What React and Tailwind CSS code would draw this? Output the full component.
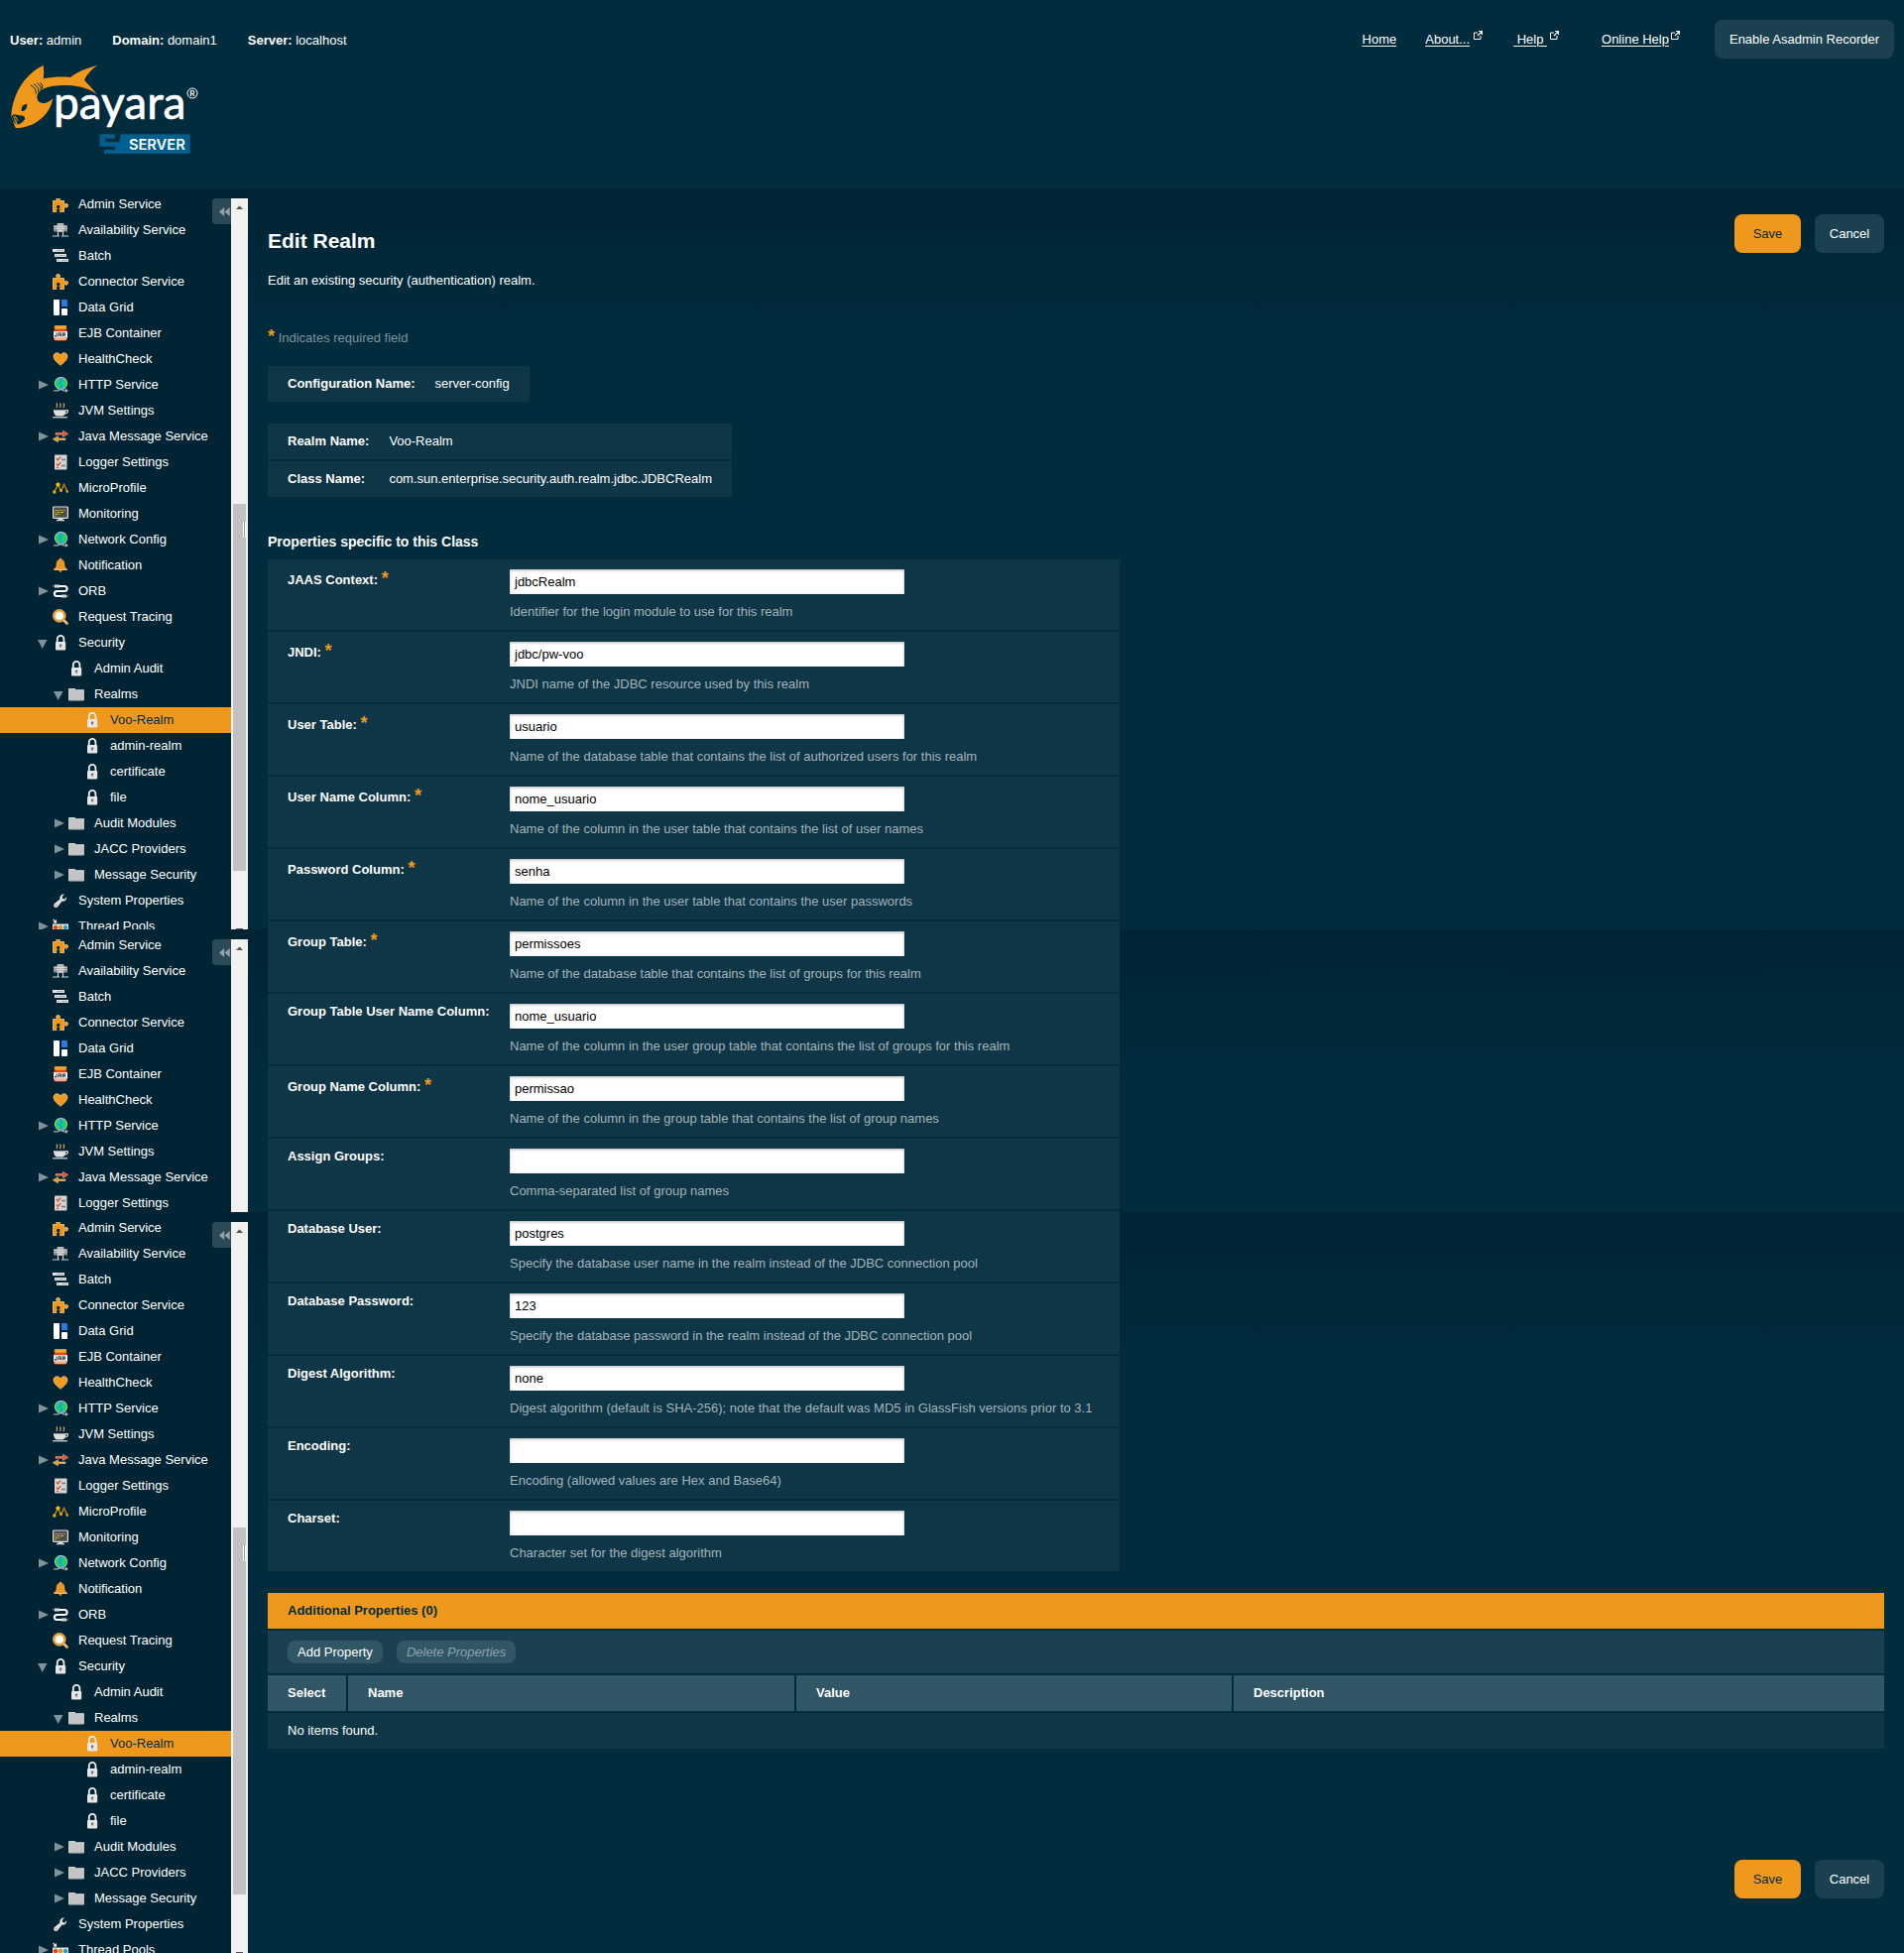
import React from "react";

const svg = { width: 16, height: 16, viewBox: "0 0 16 16", "aria-hidden": true, className: "block shrink-0" };

const icons = {
  puzzle: (
    <svg {...svg}>
      <path d="M.5 4.500h3.600V3.400a1.900 1.900 0 1 1 3 0v1.100h4.400v3.300h1a1.900 1.900 0 1 1 0 2.900h-1v4.800H.5z" fill="#f0981b" stroke="#f8cf94" strokeWidth="0.800" />
      <circle cx="5.700" cy="10.500" r="1.700" fill="#002433" />
      <path d="M5 11h1.400v2h.8v3H4.200v-3H5z" fill="#002433" />
    </svg>
  ),
  cluster: (
    <svg {...svg}>
      <rect x="1" y="3" width="4.5" height="6.5" fill="#8b8b8b" />
      <rect x="10.5" y="3" width="4.5" height="6.5" fill="#8b8b8b" />
      <rect x="4.5" y="1" width="7" height="9" rx="1" fill="#b9b9b9" />
      <path d="M1.5 4.5h13M1.5 6.5h13M5 8.5h6" stroke="#dcdcdc" strokeWidth="0.8" />
      <path d="M5.500 10v3.500M10.500 10v3.500M0 14h7M9 14h7" stroke="#cfcfcf" strokeWidth="1.2" fill="none" />
    </svg>
  ),
  batch: (
    <svg {...svg}>
      <path d="M0 2.500h12M2 7.500h12M4 12.500h12" stroke="#e3e3e3" strokeWidth="3" />
      <path d="M4 2.500h7M3 7.500h2M6 7.500h7M5 12.500h2M9 12.500h6" stroke="#aaa" strokeWidth="1" />
    </svg>
  ),
  grid: (
    <svg {...svg}>
      <rect x="1" y="0" width="6" height="16" rx="1" fill="#fff" />
      <path d="M9 0h5l1 1v6H9z" fill="#2f78dc" />
      <rect x="9" y="9" width="6" height="7" rx="1" fill="#fff" />
    </svg>
  ),
  jar: (
    <svg {...svg}>
      <rect x="2" y="0" width="12" height="4" rx="1" fill="#f5a830" stroke="#c86a10" strokeWidth="0.7" />
      <rect x="1.2" y="4" width="13.6" height="11.6" rx="2" fill="#e8431c" />
      <rect x="2" y="12.6" width="12" height="2.4" rx="1" fill="#f0b090" />
      <rect x="1" y="6.2" width="14" height="6.4" fill="#f4f4f4" />
      <path d="M4 7.5v3.6H2.4V10M6 11.4V7.8h2.6v3.6M6 9.8h2.6M10.4 11.4V7.8h2.2v1.7h-2M11.4 9.6l1.6 1.8" stroke="#222" strokeWidth="0.9" fill="none" />
    </svg>
  ),
  heart: (
    <svg {...svg}>
      <path d="M8 14.3C4 11 1 8.500 1 5.300 1 3 2.500 1.700 4.400 1.700c1.600 0 2.900.9 3.600 2.300.7-1.400 2-2.300 3.600-2.300C13.500 1.700 15 3 15 5.300 15 8.500 12 11 8 14.300z" fill="#f09a20" stroke="#f7cf98" strokeWidth="0.7" />
    </svg>
  ),
  globe: (
    <svg {...svg}>
      <circle cx="8.500" cy="6.500" r="6" fill="#1fa3df" stroke="#bdbdbd" strokeWidth="1.1" />
      <path d="M5 2.600c2-1.200 3 .4 2.200 1.700-.8 1-2.200 1-2 2.300.6 1.400 2.200 1 2.600 2.500.1 1-.8 2.400-1.600 2.400C4.500 10.500 3.400 8.500 3.400 6.500 3.400 5 4 3.500 5 2.600zM9.500 2c2.300.3 4 2 4.200 4.400 0 2.200-1.500 4.200-3 4.500-.9-.6 0-2-.8-2.900-.9-.8-1.300-1.700-.6-2.600.9-.9 1-1.400.2-3.400z" fill="#14e03c" />
      <path d="M1 13.800h4.500l1.500-1h2.500l1.500 1h3.500M13 12.200l2 1.600-2 1.600" stroke="#9fb3b0" strokeWidth="1.2" fill="none" />
    </svg>
  ),
  cup: (
    <svg {...svg}>
      <path d="M4.500 0.500c-1 1 .8 1.700 0 2.800-.6.7-.5 1.200 0 1.700M8 .5c-1 1 .8 1.700 0 2.800-.6.7-.5 1.200 0 1.700M11.500.5c-1 1 .8 1.700 0 2.800-.6.7-.5 1.200 0 1.700" stroke="#e0a860" strokeWidth="1.200" fill="none" />
      <path d="M1 7h12.500c0 4-1.500 6.500-4 6.500H5c-2.500 0-4-2.500-4-6.500z" fill="#dedede" />
      <path d="M13 7.800c2-.7 3 .3 2.400 1.500-.5 1.100-1.800 1.700-3 1.700" stroke="#dedede" strokeWidth="1.200" fill="none" />
      <path d="M2 7.500h11" stroke="#9a9a9a" strokeWidth="1" />
      <path d="M0 14.800h15" stroke="#cfcfcf" strokeWidth="1.300" />
    </svg>
  ),
  arrows: (
    <svg {...svg}>
      <path d="M3 4.600h7.500V2.400l5.200 3-5.200 3V6.200H3z" fill="#e84a1c" stroke="#fbd8cc" strokeWidth="0.500" />
      <path d="M13 9.900H5.500V7.700l-5.200 3 5.200 3v-2.200H13z" fill="#f09a20" stroke="#fbe0b8" strokeWidth="0.500" />
    </svg>
  ),
  logger: (
    <svg {...svg}>
      <rect x="2" y="0.500" width="12.500" height="15" rx="0.800" fill="#d4d4d4" />
      <path d="M4 4l1.300 2L8.300 2.600M4 9.500l1.300 2 3-3.400" stroke="#e8431c" strokeWidth="1.300" fill="none" />
      <path d="M9 5.500h4M9 11.500h4" stroke="#777" strokeWidth="1.300" />
      <path d="M4 13.500h2" stroke="#e8431c" strokeWidth="1" />
    </svg>
  ),
  micro: (
    <svg {...svg}>
      <path d="M1.800 12L5.500 4.500 8.500 11l3-6.500 3.200 6.500" stroke="#c98f10" strokeWidth="1.300" fill="none" />
      <circle cx="1.800" cy="12" r="1.700" fill="#f2aa12" />
      <circle cx="5.500" cy="4.500" r="2.100" fill="#f9b814" />
      <circle cx="8.500" cy="10.500" r="1.500" fill="#f2aa12" />
      <circle cx="11.500" cy="5" r="1.500" fill="#8a6a18" />
      <circle cx="14.700" cy="11.500" r="1.300" fill="#f2aa12" />
    </svg>
  ),
  monitor: (
    <svg {...svg}>
      <rect x="0.600" y="1" width="14.800" height="11.400" rx="0.800" fill="#4c4c4c" stroke="#e2e2e2" strokeWidth="1.200" />
      <path d="M2.500 4.500h2m1 0h2m1 0h1.500m1 0h1M2.500 6.500h1m1 0h2.500m1 0h3M2.500 8.500h3m1 0h1M2.500 10.300h1" stroke="#d9c235" strokeWidth="1" />
      <path d="M6 12.500h4l.5 1.500h1.500v1.200H4V14h1.500z" fill="#dcdcdc" />
    </svg>
  ),
  bell: (
    <svg {...svg}>
      <path d="M8 1c.8 0 1.200.5 1.200 1.300C11.500 3 12 5 12 7.500c0 2.200 1 3.400 2.700 4.500H1.300C3 10.900 4 9.700 4 7.500 4 5 4.500 3 6.800 2.300 6.800 1.500 7.200 1 8 1z" fill="#f0981b" stroke="#f6c078" strokeWidth="0.500" />
      <path d="M6.500 12.500h3c0 1.500-.5 2.500-1.500 2.500s-1.500-1-1.500-2.500z" fill="#d8841a" />
      <path d="M1.300 12.400h13.400" stroke="#f9c884" strokeWidth="1" />
    </svg>
  ),
  orb: (
    <svg {...svg}>
      <path d="M4 3h8c3.500 0 3.500 5 0 5H4.500C1 8 1 13 4.500 13H11" stroke="#fff" strokeWidth="2" fill="none" />
      <path d="M0 3h2" stroke="#9aa" strokeWidth="1" />
      <rect x="2" y="1.500" width="5" height="3" fill="#d8d8d8" />
      <rect x="9" y="11.500" width="5" height="3" fill="#d8d8d8" />
      <path d="M14 13h2" stroke="#9aa" strokeWidth="1" />
    </svg>
  ),
  magnifier: (
    <svg {...svg}>
      <path d="M10.500 10.500l4 4" stroke="#f3b877" strokeWidth="2.600" strokeLinecap="round" />
      <circle cx="6.800" cy="6.800" r="5.400" fill="#fdfdfd" stroke="#f0981b" strokeWidth="2" />
      <circle cx="6.800" cy="6.800" r="6.500" fill="none" stroke="#f8cf94" strokeWidth="0.600" />
      <path d="M4 8.500A3.300 3.300 0 0 1 8 3.700" stroke="#c9d8de" strokeWidth="0.800" fill="none" />
    </svg>
  ),
  lock: (
    <svg {...svg}>
      <path d="M4.800 8V4.200a3.300 3.300 0 0 1 6.600 0V8" stroke="#ededed" strokeWidth="1.800" fill="none" />
      <rect x="3" y="7" width="10.200" height="8.500" rx="1" fill="#e6e6e6" />
      <circle cx="8.100" cy="10.700" r="1.300" fill="#666" />
      <path d="M8.100 10.500v2.800" stroke="#888" strokeWidth="0.900" />
    </svg>
  ),
  folder: (
    <svg {...svg}>
      <path d="M0.500 2.500h6l1 1.200h8v10.300H.5z" fill="#c4c4c4" stroke="#dedede" strokeWidth="0.900" />
      <path d="M1 13.500h14.500V5" stroke="#a9a9a9" strokeWidth="0.600" fill="none" />
    </svg>
  ),
  wrench: (
    <svg {...svg}>
      <path d="M14 4.300c.7 2.700-1.600 5-4.300 4.300l-4.800 5.800c-1.900 2-5.100-1.100-3.300-3.100l5.800-4.900C6.700 3.600 8.900 1 12 1.600L9.700 4l.5 2 2 .5z" fill="#dedede" />
      <circle cx="3.300" cy="12.800" r="0.900" fill="#8c979c" />
    </svg>
  ),
  pool: (
    <svg {...svg}>
      <path d="M.5 1l3 3M3.500 1.500V4H1" stroke="#dedede" strokeWidth="1.300" fill="none" />
      <rect x="0" y="5.500" width="16" height="7" fill="#e6e6e6" />
      <circle cx="3" cy="9" r="2.200" fill="#e8431c" />
      <circle cx="8" cy="9" r="2.200" fill="#f08a1b" />
      <circle cx="13" cy="9" r="2.200" fill="#1fa3df" />
    </svg>
  ),
};

const tree = [
  { label: "Admin Service", icon: "puzzle", level: 0 },
  { label: "Availability Service", icon: "cluster", level: 0 },
  { label: "Batch", icon: "batch", level: 0 },
  { label: "Connector Service", icon: "puzzle", level: 0 },
  { label: "Data Grid", icon: "grid", level: 0 },
  { label: "EJB Container", icon: "jar", level: 0 },
  { label: "HealthCheck", icon: "heart", level: 0 },
  { label: "HTTP Service", icon: "globe", level: 0, arrow: "right" },
  { label: "JVM Settings", icon: "cup", level: 0 },
  { label: "Java Message Service", icon: "arrows", level: 0, arrow: "right" },
  { label: "Logger Settings", icon: "logger", level: 0 },
  { label: "MicroProfile", icon: "micro", level: 0 },
  { label: "Monitoring", icon: "monitor", level: 0 },
  { label: "Network Config", icon: "globe", level: 0, arrow: "right" },
  { label: "Notification", icon: "bell", level: 0 },
  { label: "ORB", icon: "orb", level: 0, arrow: "right" },
  { label: "Request Tracing", icon: "magnifier", level: 0 },
  { label: "Security", icon: "lock", level: 0, arrow: "down" },
  { label: "Admin Audit", icon: "lock", level: 1 },
  { label: "Realms", icon: "folder", level: 1, arrow: "down" },
  { label: "Voo-Realm", icon: "lock", level: 2, selected: true },
  { label: "admin-realm", icon: "lock", level: 2 },
  { label: "certificate", icon: "lock", level: 2 },
  { label: "file", icon: "lock", level: 2 },
  { label: "Audit Modules", icon: "folder", level: 1, arrow: "right" },
  { label: "JACC Providers", icon: "folder", level: 1, arrow: "right" },
  { label: "Message Security", icon: "folder", level: 1, arrow: "right" },
  { label: "System Properties", icon: "wrench", level: 0 },
  { label: "Thread Pools", icon: "pool", level: 0, arrow: "right" },
];

const indents = ["pl-[37px]", "pl-[53px]", "pl-[69px]"];

function TreeRow({ node }) {
  return (
    <li className={`flex h-[26px] items-center ${indents[node.level]} ${node.selected ? "bg-[#f0981b] text-[#002c3e]" : "text-white"}`}>
      <span className="flex w-4 shrink-0 items-center">
        {node.arrow && (
          <button type="button" aria-label={`Toggle ${node.label}`} className="block">
            <svg width="12" height="12" viewBox="0 0 12 12" className="block" aria-hidden>
              {node.arrow === "right" ? (
                <path d="M2 1.500L12 6 2 10.500z" fill="#80929a" />
              ) : (
                <path d="M1 3h9.500L5.700 12z" fill="#80929a" />
              )}
            </svg>
          </button>
        )}
      </span>
      {icons[node.icon]}
      <a href="#" className="ml-[10px] whitespace-nowrap leading-4">{node.label}</a>
    </li>
  );
}

function NavPanel({ height, nodes, thumb }) {
  return (
    <section className={`relative pt-[10px] ${height}`}>
      <div className="flex h-full">
        <nav aria-label="Configuration tree" className="h-full flex-1 overflow-hidden">
          <ul className="-mt-[7px]">
            {nodes.map((n) => (
              <TreeRow key={n.label} node={n} />
            ))}
          </ul>
        </nav>
        <div className="flex h-full w-[17px] flex-col items-center overflow-hidden bg-[#f1f1f1]">
          <svg width="17" height="17" viewBox="0 0 17 17" className="block shrink-0" aria-hidden>
            <path d="M5 11h7L8.500 7.500z" fill="#505050" />
          </svg>
          {thumb && (
            <>
              <div className="mt-[291px] flex h-[370px] w-[13px] shrink-0 justify-end bg-[#c1c1c1] pt-[18px]">
                <div className="h-4 w-[3px] border-x border-white bg-[#999]" />
              </div>
              <div className="mt-auto h-px w-[7px] shrink-0 bg-[#505050]" />
            </>
          )}
        </div>
      </div>
      <button type="button" aria-label="Collapse navigation" className="absolute left-[214px] top-[10px] flex h-[26px] w-[19px] items-center rounded-l bg-[#8fa3ac]/30 pl-[7px]">
        <svg width="11" height="9" viewBox="0 0 11 9" className="block shrink-0" aria-hidden>
          <path d="M5.200 0v9L0 4.500zM10.700 0v9L5.500 4.500z" fill="#93a3aa" />
        </svg>
      </button>
    </section>
  );
}

function Logo() {
  return (
    <svg width="192" height="91" viewBox="30 195 576 273" role="img" aria-label="Payara Server" className="block">
      <path d="M131 198C85 218 38 275 34 352L47 387C100 388 152 350 160 296C148 314 112 322 112 292C114 268 150 256 205 258C245 260 275 270 294 286C280 268 266 254 255 242C262 226 276 211 294 198C262 206 236 216 213 234C185 231 158 233 131 238C133 225 133 212 131 198Z" fill="#f0981b" />
      <path d="M82 314C70 315 64 322 65 336C76 337 82 328 82 314Z" fill="#002c3e" />
      <path d="M34 352L42 346L70 350Q78 354 74 362Q66 374 54 377L47 362L50 378Q38 366 34 352Z" fill="#002c3e" />
      <path d="M41 352L50 374M45 350L54 366" stroke="#f0981b" strokeWidth="3" />
      <path d="M93 258Q112 268 108 284M102 254Q120 264 116 280M112 251Q127 260 123 274M121 250Q132 257 128 268" stroke="#002c3e" strokeWidth="3" fill="none" />
      <text x="162" y="361" fontFamily="Lato, sans-serif" fontSize="138" fill="#fff" stroke="#fff" strokeWidth="2">payara</text>
      <circle cx="582" cy="282" r="15" fill="none" stroke="#fff" strokeWidth="3" />
      <text x="582" y="291" textAnchor="middle" fontFamily="Lato, sans-serif" fontSize="25" fontWeight="700" fill="#fff">R</text>
      <path d="M305 406H348V419H319V430H361L365 406H571Q575 406 575 410V461Q575 465 571 465H319Q315 465 315 461V453H348V443H305Q301 443 301 439V410Q301 406 305 406Z" fill="#005f8f" />
      <text x="475" y="452" textAnchor="middle" fontFamily="Inter, sans-serif" fontSize="44" fontWeight="600" fill="#fff">SERVER</text>
    </svg>
  );
}

function HeaderLink({ children, external, className = "" }) {
  return (
    <span className={`flex items-start ${className}`}>
      <a href="#" className="whitespace-pre underline underline-offset-2">{children}</a>
      {external && (
        <svg width="9" height="9" viewBox="0 0 9 9" className="block" aria-hidden>
          <path d="M4 2H.5v6.500H7V5" stroke="#fff" fill="none" />
          <path d="M5 .5h3.500V4M8.500.5L4 5" stroke="#fff" strokeWidth="1.200" fill="none" />
        </svg>
      )}
    </span>
  );
}

const buttonBase = "h-[39px] rounded-lg whitespace-nowrap";

function PageButtons() {
  return (
    <div className="flex gap-[14px]">
      <button type="submit" className={`${buttonBase} w-[67px] bg-[#f0981b] text-[#002c3e]`}>Save</button>
      <button type="button" className={`${buttonBase} w-[70px] bg-[#1b4151] text-white`}>Cancel</button>
    </div>
  );
}

const Star = () => <span className="text-lg leading-none font-bold text-[#f0981b]">*</span>;

function InfoTable({ rows }) {
  return (
    <table className="border-separate border-spacing-0">
      <tbody>
        {rows.map(([k, v], i) => {
          const edge = i ? "h-[38px] border-t-2 border-[#002c3e]" : "h-[36px]";
          return (
            <tr key={k} className="bg-[#0f3646]">
              <th scope="row" className={`px-5 text-left font-bold ${edge}`}>{k}</th>
              <td className={`pr-5 ${edge}`}>{v}</td>
            </tr>
          );
        })}
      </tbody>
    </table>
  );
}

const fields = [
  { id: "jaas", label: "JAAS Context:", required: true, value: "jdbcRealm", help: "Identifier for the login module to use for this realm" },
  { id: "jndi", label: "JNDI:", required: true, value: "jdbc/pw-voo", help: "JNDI name of the JDBC resource used by this realm" },
  { id: "userTable", label: "User Table:", required: true, value: "usuario", help: "Name of the database table that contains the list of authorized users for this realm" },
  { id: "userName", label: "User Name Column:", required: true, value: "nome_usuario", help: "Name of the column in the user table that contains the list of user names" },
  { id: "password", label: "Password Column:", required: true, value: "senha", help: "Name of the column in the user table that contains the user passwords" },
  { id: "groupTable", label: "Group Table:", required: true, value: "permissoes", help: "Name of the database table that contains the list of groups for this realm" },
  { id: "groupUser", label: "Group Table User Name Column:", value: "nome_usuario", help: "Name of the column in the user group table that contains the list of groups for this realm" },
  { id: "groupName", label: "Group Name Column:", required: true, value: "permissao", help: "Name of the column in the group table that contains the list of group names" },
  { id: "assign", label: "Assign Groups:", value: "", help: "Comma-separated list of group names" },
  { id: "dbUser", label: "Database User:", value: "postgres", help: "Specify the database user name in the realm instead of the JDBC connection pool" },
  { id: "dbPassword", label: "Database Password:", value: "123", help: "Specify the database password in the realm instead of the JDBC connection pool" },
  { id: "digest", label: "Digest Algorithm:", value: "none", help: "Digest algorithm (default is SHA-256); note that the default was MD5 in GlassFish versions prior to 3.1" },
  { id: "encoding", label: "Encoding:", value: "", help: "Encoding (allowed values are Hex and Base64)" },
  { id: "charset", label: "Charset:", value: "", help: "Character set for the digest algorithm" },
];

function FieldRow({ field }) {
  return (
    <div className="flex bg-[#0f3646] px-5 pt-[10px] pb-[11px]">
      <div className="w-[224px] shrink-0 font-bold leading-[15px]">
        <label htmlFor={field.id}>
          {field.label}
          {field.required && <> <Star /></>}
        </label>
      </div>
      <div className="flex-1">
        <input
          id={field.id}
          type="text"
          defaultValue={field.value}
          className="block h-[25px] w-[398px] bg-white px-[5px] text-black shadow-[inset_0_1px_3px_rgba(0,0,0,0.3)] outline-none"
        />
        <p className="mt-[10px] leading-[15px] text-[#a3b4bb]">{field.help}</p>
      </div>
    </div>
  );
}

const headCell = "h-[38px] border-b-2 border-[#002c3e] bg-[#315665] px-5 text-left font-bold";

function PropertiesTable() {
  return (
    <section className="mt-[22px]">
      <h2 className="flex h-[36px] items-center bg-[#f0981b] px-5 font-bold text-[#002c3e]">Additional Properties (0)</h2>
      <div className="mt-[2px] flex h-[43px] items-center gap-[14px] bg-[#1b4151] px-5">
        <button type="button" className="h-[23px] rounded-lg bg-[#315665] px-[10px] text-white">Add Property</button>
        <button type="button" disabled className="h-[23px] rounded-lg bg-[#315665] px-[10px] text-[#8fa3ac] italic">Delete Properties</button>
      </div>
      <table className="mt-[2px] w-full table-fixed border-separate border-spacing-0">
        <thead>
          <tr>
            <th className={`${headCell} w-[81px] border-r-2`}>Select</th>
            <th className={`${headCell} w-[452px] border-r-2`}>Name</th>
            <th className={`${headCell} w-[441px] border-r-2`}>Value</th>
            <th className={headCell}>Description</th>
          </tr>
        </thead>
        <tbody>
          <tr className="bg-[#0f3646]">
            <td colSpan={4} className="h-[36px] px-5">No items found.</td>
          </tr>
        </tbody>
      </table>
    </section>
  );
}

export default function App() {
  return (
    <div className="min-h-screen bg-[#002c3e] font-['Liberation_Sans',Arial,sans-serif] text-[13px] leading-[18px] text-white">
      <header className="h-[190px] px-[10px] pt-5">
        <div className="flex h-[39px] items-center justify-between">
          <div className="flex gap-[31px] pt-[2px]">
            <span><b>User:</b> admin</span>
            <span><b>Domain:</b> domain1</span>
            <span><b>Server:</b> localhost</span>
          </div>
          <div className="flex items-center">
            <HeaderLink>Home</HeaderLink>
            <HeaderLink external className="ml-[29px] gap-1">About...</HeaderLink>
            <HeaderLink external className="ml-[31px] gap-[3px]">{" Help "}</HeaderLink>
            <HeaderLink external className="ml-[43px] gap-[2px]">Online Help</HeaderLink>
            <button type="button" className={`${buttonBase} ml-[35px] bg-[#1b4151] px-[15px] text-white`}>Enable Asadmin Recorder</button>
          </div>
        </div>
        <div className="mt-[6px]"><Logo /></div>
      </header>

      <div className="flex items-stretch">
        <aside className="w-[250px] shrink-0 bg-[#002433]">
          <NavPanel height="h-[747px]" nodes={tree} thumb />
          <NavPanel height="h-[285px]" nodes={tree.slice(0, 11)} />
          <NavPanel height="h-[747px]" nodes={tree} thumb />
        </aside>

        <main className="min-w-0 flex-1 bg-[linear-gradient(to_bottom,#002433_0px,#002c3e_160px,#002c3e_747px,#002433_747px,#002c3e_907px,#002c3e_1032px,#002433_1032px,#002c3e_1192px)] px-5">
          <form onSubmit={(e) => e.preventDefault()}>
            <div className="flex items-start justify-between pt-[26px]">
              <div className="pt-[14px]">
                <h1 className="text-[21px] leading-[26px] font-bold">Edit Realm</h1>
                <p className="mt-[18px]">Edit an existing security (authentication) realm.</p>
              </div>
              <PageButtons />
            </div>
            <p className="mt-[38px] h-[18px] text-[#7e939c]"><Star /> Indicates required field</p>

            <div className="mt-[21px]"><InfoTable rows={[["Configuration Name:", "server-config"]]} /></div>
            <div className="mt-[22px]">
              <InfoTable rows={[["Realm Name:", "Voo-Realm"], ["Class Name:", "com.sun.enterprise.security.auth.realm.jdbc.JDBCRealm"]]} />
            </div>

            <h2 className="mt-[36px] text-sm leading-[18px] font-bold">Properties specific to this Class</h2>
            <div className="mt-[9px] flex w-[859px] max-w-full flex-col gap-[2px] bg-[#002c3e]">
              {fields.map((f) => <FieldRow key={f.id} field={f} />)}
            </div>

            <PropertiesTable />
            <div className="mt-28 flex justify-end"><PageButtons /></div>
          </form>
        </main>
      </div>
    </div>
  );
}
